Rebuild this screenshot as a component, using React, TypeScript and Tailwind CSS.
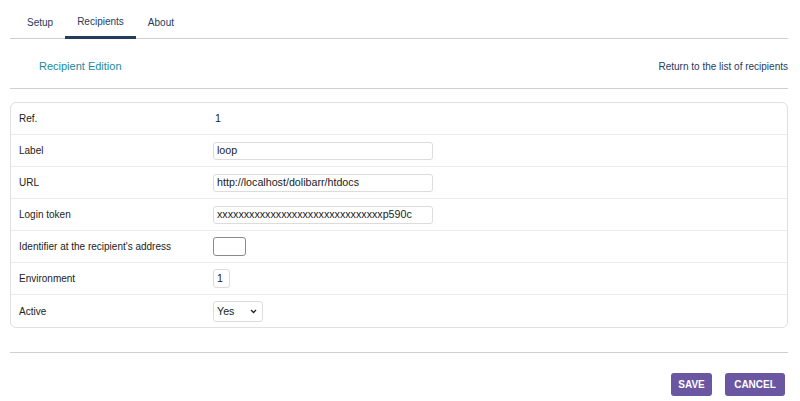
import React from "react";

const rows: { label: string; kind: string; value?: string }[] = [
  { label: "Ref.", kind: "text", value: "1" },
  { label: "Label", kind: "input", value: "loop" },
  { label: "URL", kind: "input", value: "http://localhost/dolibarr/htdocs" },
  { label: "Login token", kind: "input", value: "xxxxxxxxxxxxxxxxxxxxxxxxxxxxxxxp590c" },
  { label: "Identifier at the recipient's address", kind: "small" },
  { label: "Environment", kind: "env", value: "1" },
  { label: "Active", kind: "select", value: "Yes" },
];

export default function App() {
  return (
    <div
      className="w-[800px] h-[401px] bg-white text-[10px] text-[#222] overflow-hidden"
      style={{ fontFamily: '"Liberation Sans", Arial, sans-serif' }}
    >
      <div className="ml-[10px] mr-[12px]">
        {/* Tabs */}
        <div className="flex h-[39px] border-b border-[#cfcfcf] pl-[5px]">
          <div className="px-[12px] h-[39px] flex items-center pt-[6px] text-[#263c5c]">Setup</div>
          <div className="px-[12px] h-[39px] flex items-center pt-[6px] text-[#263c5c] border-b-[3px] border-[#263c5c] mb-[-1px]">
            Recipients
          </div>
          <div className="px-[12px] h-[39px] flex items-center pt-[6px] text-[#263c5c]">About</div>
        </div>
        {/* Title */}
        <div className="flex items-center justify-between h-[50px] pt-[5px] border-b border-[#cfcfcf]">
          <div className="pl-[29px] text-[#1b8aa0] text-[11px]">Recipient Edition</div>
          <div className="text-[#263c5c]">Return to the list of recipients</div>
        </div>
        {/* Table */}
        <div className="mt-[13px] border border-[#e0e0e0] rounded-[6px]">
          {rows.map((r, i) => (
            <div
              key={r.label}
              className={`flex items-center h-[32px] ${i < rows.length - 1 ? "border-b border-[#ececec]" : ""}`}
            >
              <div className="w-[202px] pl-[8px]">{r.label}</div>
              <div className="flex items-center text-[10.7px]">
                {r.kind === "text" && <span className="pl-[2px]">{r.value}</span>}
                {r.kind === "input" && (
                  <div className="w-[220px] h-[18px] border border-[#dcdcdc] rounded-[3px] flex items-center px-[3px] bg-white">
                    {r.value}
                  </div>
                )}
                {r.kind === "small" && (
                  <div className="w-[33px] h-[19px] border border-[#8a8a8a] rounded-[3px] bg-white" />
                )}
                {r.kind === "env" && (
                  <div className="w-[17px] h-[19px] border border-[#dcdcdc] rounded-[3px] flex items-center px-[3px] bg-white">
                    {r.value}
                  </div>
                )}
                {r.kind === "select" && (
                  <div className="w-[50px] h-[21px] border border-[#dcdcdc] rounded-[3px] flex items-center justify-between pl-[3px] pr-[5px] bg-white">
                    <span>{r.value}</span>
                    <svg width="7" height="5" viewBox="0 0 7 5">
                      <path d="M1 1 L3.5 3.5 L6 1" stroke="#222" strokeWidth="1.3" fill="none" />
                    </svg>
                  </div>
                )}
              </div>
            </div>
          ))}
        </div>
        {/* bottom line */}
        <div className="mt-[24px] border-b border-[#cfcfcf]" />
        <div className="flex justify-end gap-[13px] mt-[20px] pr-[3px]">
          <div className="h-[23px] w-[41px] flex items-center justify-center bg-[#6a56a1] text-white font-bold rounded-[3px] text-[10px]">
            SAVE
          </div>
          <div className="h-[23px] w-[60px] flex items-center justify-center bg-[#6a56a1] text-white font-bold rounded-[3px] text-[10px]">
            CANCEL
          </div>
        </div>
      </div>
    </div>
  );
}
